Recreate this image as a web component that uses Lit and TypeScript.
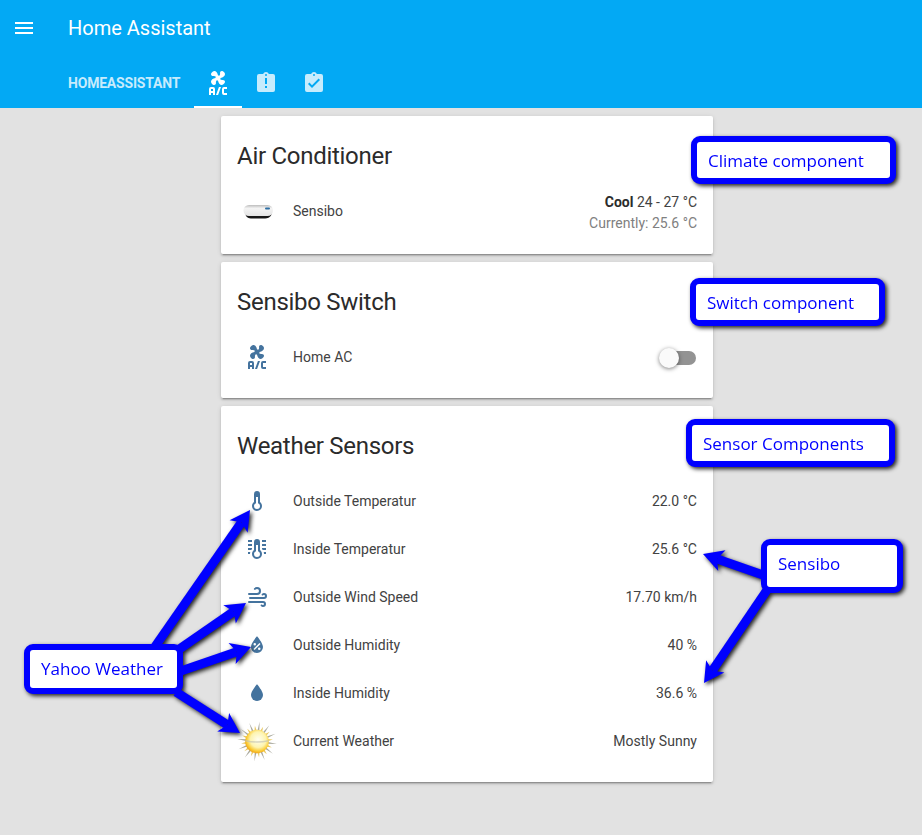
import { LitElement, css, html, svg } from "lit";
import { customElement } from "lit/decorators.js";

// mdi paths
const ICONS: Record<string, string> = {
  menu: "M3,6H21V8H3V6M3,11H21V13H3V11M3,16H21V18H3V16Z",
  ac: "M6.59,0.66C8.93,-1.15 11.47,1.06 12.04,4.5C12.47,4.5 12.89,4.62 13.27,4.84C13.79,4.24 14.25,3.42 14.07,2.5C13.65,0.35 16.06,-1.39 18.35,1.58C20.16,3.92 17.95,6.46 14.5,7.03C14.5,7.46 14.39,7.89 14.16,8.27C14.76,8.78 15.58,9.24 16.5,9.06C18.63,8.64 20.38,11.04 17.41,13.34C15.07,15.15 12.53,12.94 11.96,9.5C11.53,9.5 11.11,9.37 10.74,9.15C10.22,9.75 9.75,10.58 9.93,11.5C10.35,13.64 7.94,15.39 5.65,12.42C3.83,10.07 6.05,7.53 9.5,6.97C9.5,6.54 9.63,6.12 9.85,5.74C9.25,5.23 8.43,4.76 7.5,4.94C5.36,5.36 3.61,2.96 6.59,0.66M5,16H7A2,2 0 0,1 9,18V24H7V22H5V24H3V18A2,2 0 0,1 5,16M5,18V20H7V18H5M12.93,16H15L12.07,24H10L12.93,16M18,16H21V18H18V22H21V24H18A2,2 0 0,1 16,22V18A2,2 0 0,1 18,16Z",
  alert: "M19,3H14.82C14.4,1.84 13.3,1 12,1C10.7,1 9.6,1.84 9.18,3H5A2,2 0 0,0 3,5V19A2,2 0 0,0 5,21H19A2,2 0 0,0 21,19V5A2,2 0 0,0 19,3M12,3A1,1 0 0,1 13,4A1,1 0 0,1 12,5A1,1 0 0,1 11,4A1,1 0 0,1 12,3M13,17H11V15H13V17M13,13H11V7H13V13Z",
  check: "M19,3H14.82C14.4,1.84 13.3,1 12,1C10.7,1 9.6,1.84 9.18,3H5A2,2 0 0,0 3,5V19A2,2 0 0,0 5,21H19A2,2 0 0,0 21,19V5A2,2 0 0,0 19,3M12,3A1,1 0 0,1 13,4A1,1 0 0,1 12,5A1,1 0 0,1 11,4A1,1 0 0,1 12,3M10,17L6,13L7.41,11.59L10,14.17L16.59,7.58L18,9L10,17Z",
  thermometer: "M17,17A5,5 0 0,1 12,22A5,5 0 0,1 7,17C7,15.36 7.79,13.91 9,13V5A3,3 0 0,1 12,2A3,3 0 0,1 15,5V13C16.21,13.91 17,15.36 17,17M11,8V14.17C9.83,14.58 9,15.69 9,17A3,3 0 0,0 12,20A3,3 0 0,0 15,17C15,15.69 14.17,14.58 13,14.17V8H11Z",
  thermometerLines: "M17,3H21V5H17V3M17,7H21V9H17V7M17,11H21V13H17.75L17,12.1V11M21,15V17H19C19,16.31 18.9,15.63 18.71,15H21M7,3V5H3V3H7M7,7V9H3V7H7M7,11V12.1L6.25,13H3V11H7M3,15H5.29C5.1,15.63 5,16.31 5,17H3V15M17,17A5,5 0 0,1 12,22A5,5 0 0,1 7,17C7,15.36 7.79,13.91 9,13V5A3,3 0 0,1 12,2A3,3 0 0,1 15,5V13C16.21,13.91 17,15.36 17,17M11,8V14.17C9.83,14.58 9,15.69 9,17A3,3 0 0,0 12,20A3,3 0 0,0 15,17C15,15.69 14.17,14.58 13,14.17V8H11Z",
  windy: "M4,10A1,1 0 0,1 3,9A1,1 0 0,1 4,8H12A2,2 0 0,0 14,6A2,2 0 0,0 12,4C11.45,4 10.95,4.22 10.59,4.59C10.2,5 9.56,5 9.17,4.59C8.78,4.2 8.78,3.56 9.17,3.17C9.9,2.45 10.9,2 12,2A4,4 0 0,1 16,6A4,4 0 0,1 12,10H4M19,12A1,1 0 0,0 20,11A1,1 0 0,0 19,10C18.72,10 18.47,10.11 18.29,10.29C17.9,10.68 17.27,10.68 16.88,10.29C16.5,9.9 16.5,9.27 16.88,8.88C17.42,8.34 18.17,8 19,8A3,3 0 0,1 22,11A3,3 0 0,1 19,14H5A1,1 0 0,1 4,13A1,1 0 0,1 5,12H19M18,18H4A1,1 0 0,1 3,17A1,1 0 0,1 4,16H18A3,3 0 0,1 21,19A3,3 0 0,1 18,22C17.17,22 16.42,21.66 15.88,21.12C15.5,20.73 15.5,20.1 15.88,19.71C16.27,19.32 16.9,19.32 17.29,19.71C17.47,19.89 17.72,20 18,20A1,1 0 0,0 19,19A1,1 0 0,0 18,18Z",
  waterPercent: "M12,3.25C12,3.25 6,10 6,14C6,17.32 8.69,20 12,20A6,6 0 0,0 18,14C18,10 12,3.25 12,3.25M14.47,9.97L15.53,11.03L9.53,17.03L8.47,15.97M9.75,10A1.25,1.25 0 0,1 11,11.25A1.25,1.25 0 0,1 9.75,12.5A1.25,1.25 0 0,1 8.5,11.25A1.25,1.25 0 0,1 9.75,10M14.25,14.5A1.25,1.25 0 0,1 15.5,15.75A1.25,1.25 0 0,1 14.25,17A1.25,1.25 0 0,1 13,15.75A1.25,1.25 0 0,1 14.25,14.5Z",
  water: "M12,20A6,6 0 0,1 6,14C6,10 12,3.25 12,3.25C12,3.25 18,10 18,14A6,6 0 0,1 12,20Z",
};

const icon = (name: string) => html`<svg class="icon" viewBox="0 0 24 24"><path d=${ICONS[name]} fill-rule="evenodd"></path></svg>`;

const sensibo = html`<svg class="pic" viewBox="0 0 40 40">
  <defs>
    <linearGradient id="dev" x1="0" y1="0" x2="0" y2="1">
      <stop offset="0" stop-color="#bdbdbd"></stop>
      <stop offset="0.3" stop-color="#f4f4f4"></stop>
      <stop offset="1" stop-color="#e4e4e4"></stop>
    </linearGradient>
    <filter id="soft"><feGaussianBlur stdDeviation="0.45"></feGaussianBlur></filter>
  </defs>
  <g filter="url(#soft)">
    <path d="M9,21 H34 C35.5,24 31,26.6 27,26.6 H15 C11,26.6 7.5,24 9,21Z" fill="#151515"></path>
    <rect x="6.5" y="13" width="29.5" height="11" rx="5.5" fill="url(#dev)"></rect>
    <rect x="28" y="15.4" width="5" height="2" rx="1" fill="#2d6ea3"></rect>
  </g>
</svg>`;

// rays of the sun picture, long and short in turn
const rays = Array.from({ length: 24 }, (_, i) => {
  const long = i % 2 === 0;
  const a = (i * Math.PI * 2) / 24 + 0.13;
  const a2 = long ? 0.1 : 0.13;
  const r = long ? 20 : 16;
  const p = (rad: number, ang: number) => `${(20 + rad * Math.cos(ang)).toFixed(2)},${(20.5 + rad * Math.sin(ang)).toFixed(2)}`;
  return svg`<polygon points="${p(10, a - a2)} ${p(r, a)} ${p(10, a + a2)}" fill="${long ? "#a8a89c" : "#e8c860"}"></polygon>`;
});

const sun = html`<svg class="pic" viewBox="0 0 40 40">
  <defs>
    <radialGradient id="disc" cx="0.55" cy="0.42" r="0.6">
      <stop offset="0" stop-color="#fffef0"></stop>
      <stop offset="0.55" stop-color="#fdf4b0"></stop>
      <stop offset="0.82" stop-color="#fbcb34"></stop>
      <stop offset="1" stop-color="#ee9f14"></stop>
    </radialGradient>
  </defs>
  ${rays}
  <circle cx="20" cy="20.5" r="11.8" fill="url(#disc)"></circle>
  <path d="M8.5,19 Q20,21.5 31.5,19 L31.5,20.4 Q20,23 8.5,20.4Z" fill="#c4c4b4" opacity="0.7"></path>
</svg>`;

interface Row {
  icon: unknown;
  name: string;
  value: string;
}

const WEATHER: Row[] = [
  { icon: icon("thermometer"), name: "Outside Temperatur", value: "22.0 °C" },
  { icon: icon("thermometerLines"), name: "Inside Temperatur", value: "25.6 °C" },
  { icon: icon("windy"), name: "Outside Wind Speed", value: "17.70 km/h" },
  { icon: icon("waterPercent"), name: "Outside Humidity", value: "40 %" },
  { icon: icon("water"), name: "Inside Humidity", value: "36.6 %" },
  { icon: sun, name: "Current Weather", value: "Mostly Sunny" },
];

// callouts drawn over the screenshot: x, y, w, h, bottom padding, label
const CALLOUTS: [number, number, number, number, number, string][] = [
  [691, 136, 205, 48, 0, "Climate component"],
  [690, 278, 195, 48, 0, "Switch component"],
  [686, 419, 209, 48, 0, "Sensor Components"],
  [761, 539, 142, 54, 6, "Sensibo"],
  [24, 644, 159, 50, 2, "Yahoo Weather"],
];

// arrows: from x, y to tip x, y
const ARROWS: [number, number, number, number][] = [
  [154, 648, 250, 510],
  [178, 650, 246, 603],
  [178, 672, 251, 647],
  [176, 692, 240, 733],
  [763, 575, 703, 554],
  [767, 590, 704, 683],
];

function arrow([x1, y1, x2, y2]: [number, number, number, number]) {
  const len = Math.hypot(x2 - x1, y2 - y1);
  const ux = (x2 - x1) / len;
  const uy = (y2 - y1) / len;
  const bx = x2 - ux * 20;
  const by = y2 - uy * 20;
  const nx = x2 - ux * 15;
  const ny = y2 - uy * 15;
  const head = [`${x2},${y2}`, `${bx - uy * 11},${by + ux * 11}`, `${nx},${ny}`, `${bx + uy * 11},${by - ux * 11}`].join(" ");
  return svg`<line x1=${x1} y1=${y1} x2=${nx} y2=${ny} stroke="#0000ff" stroke-width="9"></line><polygon points=${head} fill="#0000ff"></polygon>`;
}

@customElement("app-root")
export class AppRoot extends LitElement {
  static styles = css`
    :host {
      display: block;
      position: relative;
      height: 835px;
      overflow: hidden;
      background: #e2e2e2;
      font-family: Roboto, sans-serif;
      color: #212121;
    }
    .icon {
      width: 24px;
      height: 24px;
      fill: currentColor;
      display: block;
    }
    .pic {
      width: 40px;
      height: 40px;
      display: block;
    }
    .header {
      height: 108px;
      background: #03a9f4;
      color: #fff;
      display: flex;
      flex-direction: column;
    }
    .toolbar {
      height: 56px;
      display: flex;
      align-items: center;
      padding-left: 12px;
      gap: 32px;
    }
    .app-title {
      font-size: 20px;
      font-weight: 400;
    }
    .tabs {
      height: 48px;
      margin-top: 4px;
      display: flex;
      padding-left: 68px;
      color: rgba(255, 255, 255, 0.78);
    }
    .tab {
      height: 46px;
      display: flex;
      align-items: center;
      justify-content: center;
      border-bottom: 2px solid transparent;
    }
    .tab.text {
      font-size: 14px;
      font-weight: 700;
      letter-spacing: -0.2px;
      text-transform: uppercase;
      width: 126px;
      justify-content: flex-start;
    }
    .tab.ico {
      width: 48px;
    }
    .tab.active {
      color: #fff;
      border-bottom-color: #fff;
    }
    .column {
      width: 492px;
      margin-left: 221px;
      padding-top: 8px;
      display: flex;
      flex-direction: column;
      gap: 8px;
    }
    .card {
      background: #fff;
      border-radius: 2px;
      box-shadow: 0 2px 2px rgba(0, 0, 0, 0.14), 0 1px 5px rgba(0, 0, 0, 0.12), 0 3px 1px -2px rgba(0, 0, 0, 0.2);
      padding: 0 16px 21px;
    }
    .card h2 {
      margin: 0;
      padding: 24px 0 19px;
      font-size: 24px;
      line-height: 32px;
      font-weight: 400;
      letter-spacing: -0.28px;
      color: #2b2b2b;
    }
    .rows {
      display: flex;
      flex-direction: column;
      gap: 8px;
    }
    .row {
      min-height: 40px;
      display: flex;
      align-items: center;
      font-size: 14px;
      color: #424242;
    }
    .badge {
      width: 40px;
      height: 40px;
      display: flex;
      align-items: center;
      justify-content: center;
      color: #44739e;
      flex: none;
    }
    .name {
      margin-left: 16px;
      flex: 1;
    }
    .name.up {
      margin-bottom: 2px;
    }
    .value {
      text-align: right;
      line-height: 21px;
    }
    .value.two {
      margin: 1px 0 -1px;
    }
    .value b {
      font-weight: 700;
      color: #2b2b2b;
    }
    .current {
      color: #808080;
    }
    .switch {
      position: relative;
      width: 36px;
      height: 14px;
      margin-top: 1px;
      border-radius: 7px;
      background: #939393;
      margin-right: 1px;
    }
    .knob {
      position: absolute;
      left: -1px;
      top: -3px;
      width: 20px;
      height: 20px;
      border-radius: 50%;
      background: #fafafa;
      box-shadow: 0 1px 4px rgba(0, 0, 0, 0.5);
    }
    .notes {
      position: absolute;
      left: 0;
      top: 0;
      width: 922px;
      height: 835px;
      filter: drop-shadow(2px 2px 2px rgba(0, 0, 0, 0.85));
    }
    .arrows {
      position: absolute;
      left: 0;
      top: 0;
    }
    .callout {
      position: absolute;
      box-sizing: border-box;
      border: 6px solid #0000ff;
      border-radius: 9px;
      background: #fff;
      display: flex;
      align-items: center;
      padding-left: 11px;
      color: #0000ff;
      font-family: "Open Sans", sans-serif;
      font-size: 17px;
    }
  `;

  render() {
    return html`
      <div class="header">
        <div class="toolbar">
          ${icon("menu")}
          <div class="app-title">Home Assistant</div>
        </div>
        <div class="tabs">
          <div class="tab text">Homeassistant</div>
          <div class="tab ico active">${icon("ac")}</div>
          <div class="tab ico">${icon("alert")}</div>
          <div class="tab ico">${icon("check")}</div>
        </div>
      </div>
      <div class="column">
        <div class="card">
          <h2>Air Conditioner</h2>
          <div class="rows">
            <div class="row">
              <div class="badge">${sensibo}</div>
              <div class="name up">Sensibo</div>
              <div class="value two">
                <div><b>Cool</b> 24 - 27 °C</div>
                <div class="current">Currently: 25.6 °C</div>
              </div>
            </div>
          </div>
        </div>
        <div class="card">
          <h2>Sensibo Switch</h2>
          <div class="rows">
            <div class="row">
              <div class="badge">${icon("ac")}</div>
              <div class="name">Home AC</div>
              <div class="switch"><div class="knob"></div></div>
            </div>
          </div>
        </div>
        <div class="card">
          <h2>Weather Sensors</h2>
          <div class="rows">
            ${WEATHER.map(
              (r) => html`<div class="row">
                <div class="badge">${r.icon}</div>
                <div class="name">${r.name}</div>
                <div class="value">${r.value}</div>
              </div>`
            )}
          </div>
        </div>
      </div>
      <div class="notes">
        <svg class="arrows" width="922" height="835">${ARROWS.map(arrow)}</svg>
        ${CALLOUTS.map(
          ([x, y, w, h, pb, label]) =>
            html`<div class="callout" style="left:${x}px;top:${y}px;width:${w}px;height:${h}px;padding-bottom:${pb}px">${label}</div>`
        )}
      </div>
    `;
  }
}
